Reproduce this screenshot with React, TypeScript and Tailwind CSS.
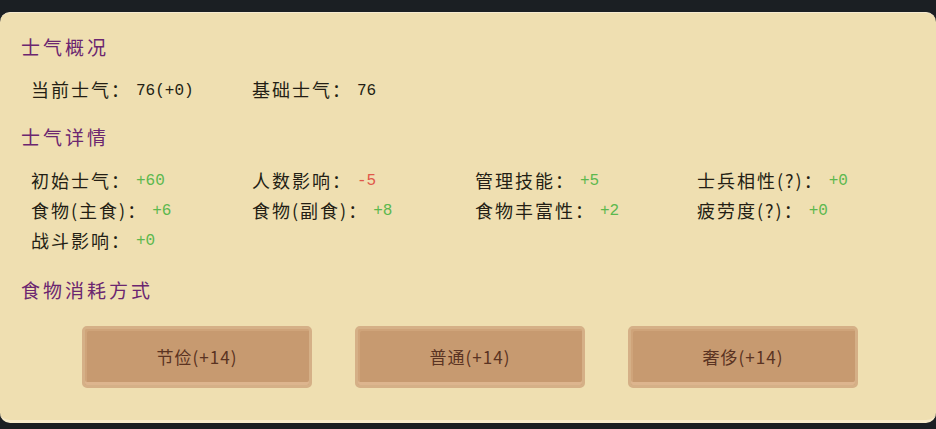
type Stat = {
  label: string;
  value: string;
  tone?: "up" | "down" | "plain";
};

const overview: Stat[] = [
  { label: "当前士气：", value: "76(+0)", tone: "plain" },
  { label: "基础士气：", value: "76", tone: "plain" },
];

const details: Stat[] = [
  { label: "初始士气：", value: "+60", tone: "up" },
  { label: "人数影响：", value: "-5", tone: "down" },
  { label: "管理技能：", value: "+5", tone: "up" },
  { label: "士兵相性(?)：", value: "+0", tone: "up" },
  { label: "食物(主食)：", value: "+6", tone: "up" },
  { label: "食物(副食)：", value: "+8", tone: "up" },
  { label: "食物丰富性：", value: "+2", tone: "up" },
  { label: "疲劳度(?)：", value: "+0", tone: "up" },
  { label: "战斗影响：", value: "+0", tone: "up" },
];

const rations = ["节俭(+14)", "普通(+14)", "奢侈(+14)"];

const cjk = { fontFamily: '"Noto Sans CJK SC", "Noto Sans", sans-serif' };
const mono = { fontFamily: '"Liberation Mono", "DejaVu Sans Mono", monospace' };

function StatItem({ stat }: { stat: Stat }) {
  const color =
    stat.tone === "up"
      ? "text-[#5cb84e]"
      : stat.tone === "down"
        ? "text-[#e0574a]"
        : "text-[#231e14]";
  return (
    <div className="flex items-center whitespace-nowrap">
      <span className="text-[18px] tracking-[2px] text-[#231e14]">{stat.label}</span>
      <span className={`ml-[5px] mt-[2px] text-[16px] ${color}`} style={mono}>
        {stat.value}
      </span>
    </div>
  );
}

function Heading({ children }: { children: string }) {
  return <h2 className="h-[24px] text-[19px] leading-[24px] tracking-[3px] text-[#6b2670]">{children}</h2>;
}

export default function App() {
  return (
    <div className="h-[429px] w-[936px] bg-[#1b1f23] pt-[12px]" style={cjk}>
      <div className="h-[411px] rounded-[10px] border-t border-b-[3px] border-t-[#f6ead0] border-b-[#f8eccb] bg-[#efdfb1] pl-[21px] pt-[22px]">
        <Heading>士气概况</Heading>
        <div className="mt-[17px] grid h-[24px] grid-cols-[221px_223px_222px_1fr] items-center pl-[10px]">
          {overview.map((s) => (
            <StatItem key={s.label} stat={s} />
          ))}
        </div>

        <div className="mt-[25px]">
          <Heading>士气详情</Heading>
        </div>
        <div className="mt-[16px] grid grid-cols-[221px_223px_222px_1fr] auto-rows-[30px] items-center pl-[10px]">
          {details.map((s) => (
            <StatItem key={s.label} stat={s} />
          ))}
        </div>

        <div className="mt-[23px]">
          <Heading>食物消耗方式</Heading>
        </div>
        <div className="mt-[24px] flex justify-center gap-[43px] pr-[17px]">
          {rations.map((r) => (
            <button
              key={r}
              className="flex h-[62px] w-[230px] items-center justify-center rounded-[5px] border-[3px] border-[#d5b087] bg-[#c79a70] text-[17px] tracking-[1px] text-[#5a3322] shadow-[inset_0_-3px_0_#ddb58e,inset_2px_2px_0_#cfa47a]"
            >
              {r}
            </button>
          ))}
        </div>
      </div>
    </div>
  );
}
